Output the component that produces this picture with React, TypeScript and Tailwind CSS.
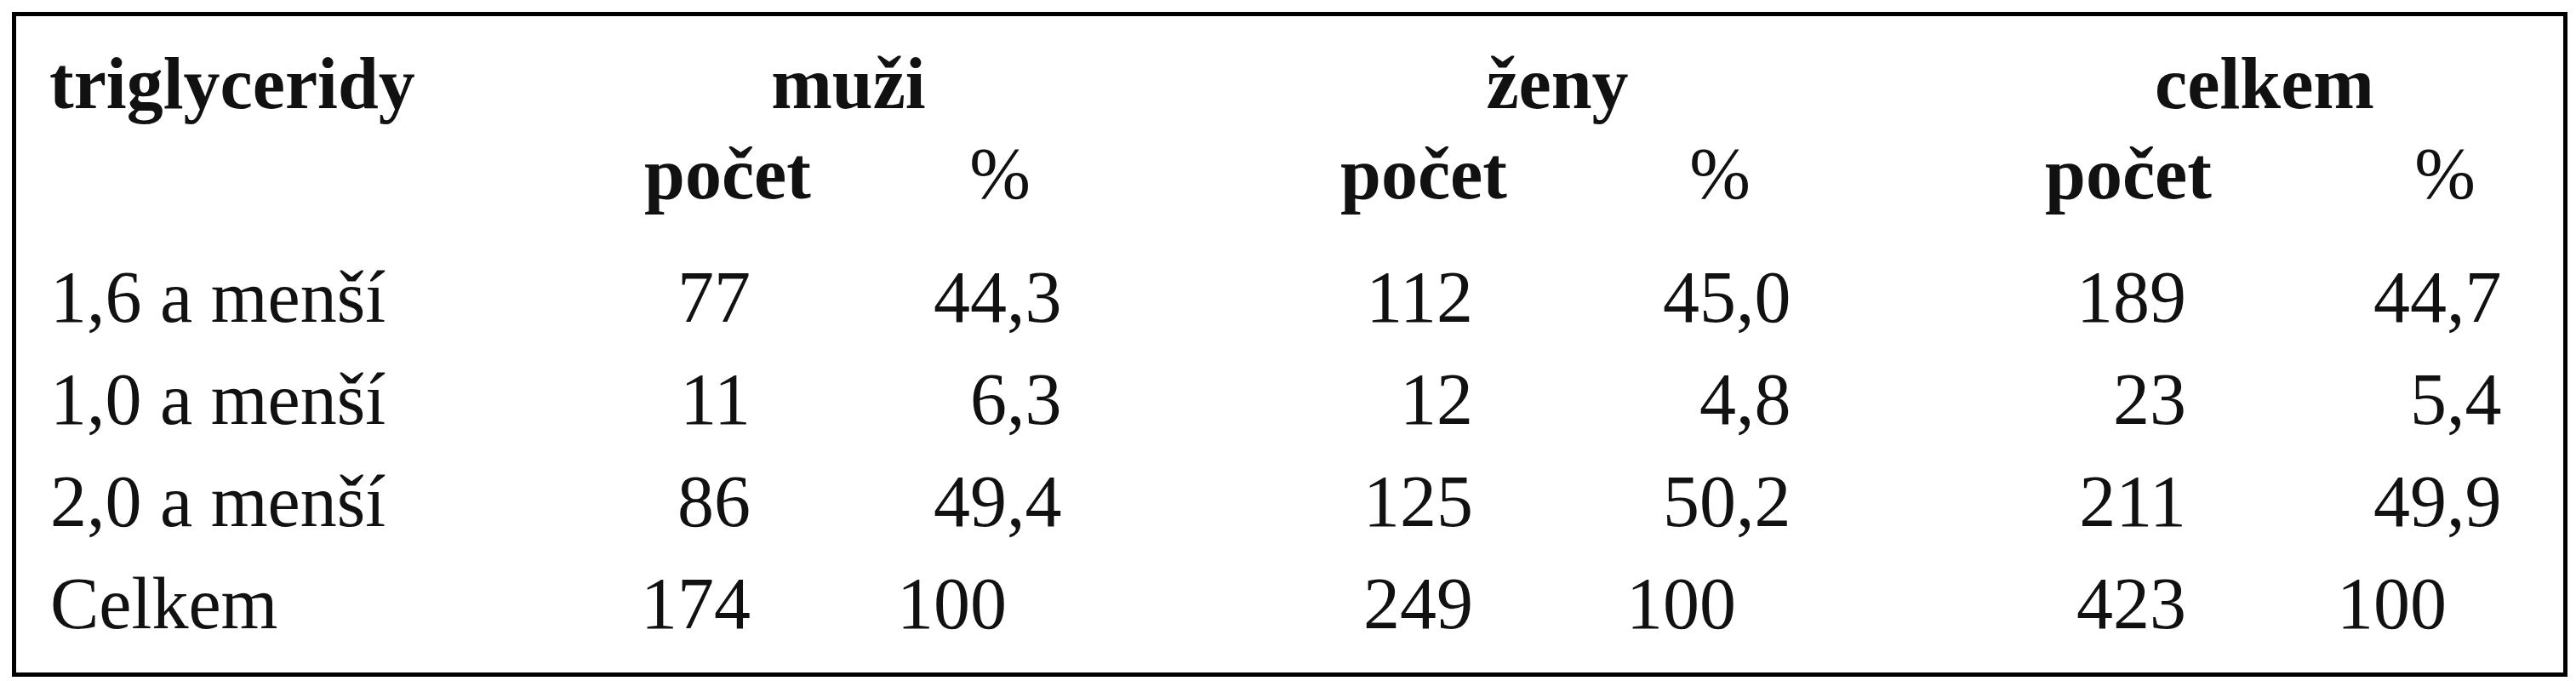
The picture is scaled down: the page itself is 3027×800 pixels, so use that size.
import React from "react";

type Row = {
  label: string;
  m: string;
  mp: [string, string];
  z: string;
  zp: [string, string];
  c: string;
  cp: [string, string];
};

const rows: Row[] = [
  { label: "1,6 a menší", m: "77", mp: ["44", ",3"], z: "112", zp: ["45", ",0"], c: "189", cp: ["44", ",7"] },
  { label: "1,0 a menší", m: "11", mp: ["6", ",3"], z: "12", zp: ["4", ",8"], c: "23", cp: ["5", ",4"] },
  { label: "2,0 a menší", m: "86", mp: ["49", ",4"], z: "125", zp: ["50", ",2"], c: "211", cp: ["49", ",9"] },
  { label: "Celkem", m: "174", mp: ["100", ""], z: "249", zp: ["100", ""], c: "423", cp: ["100", ""] },
];

export default function App() {
  return (
    <div className="bg-white w-[3027px] h-[800px] pt-[14px] pl-[14px] text-[#111] [font-family:'Liberation_Serif','Times_New_Roman',serif] text-[86px]">
      <div className="w-[3003px] h-[781px] border-[5px] border-black box-border">
        {/* header row 1 */}
        <div className="flex pt-[26px] leading-[106px] font-bold whitespace-nowrap">
          <div className="w-[681px] pl-[39px]">triglyceridy</div>
          <div className="w-[400px] ml-[97px] text-center">muži</div>
          <div className="w-[400px] ml-[433px] text-center">ženy</div>
          <div className="w-[400px] ml-[431px] text-center">celkem</div>
        </div>
        {/* header row 2 */}
        <div className="flex leading-[106px] whitespace-nowrap">
          <div className="w-[240px] ml-[716px] text-center font-bold">počet</div>
          <div className="w-[240px] ml-[80px] text-center">%</div>
          <div className="w-[240px] ml-[258px] text-center font-bold">počet</div>
          <div className="w-[240px] ml-[108px] text-center">%</div>
          <div className="w-[240px] ml-[240px] text-center font-bold">počet</div>
          <div className="w-[240px] ml-[132px] text-center">%</div>
        </div>
        {/* body */}
        <div className="mt-[32px] flex flex-col">
          {rows.map((r) => (
            <div key={r.label} className="flex leading-[120px] whitespace-nowrap">
              <div className="w-[681px] pl-[40px]">{r.label}</div>
              <div className="w-[182px] text-right">{r.m}</div>
              <div className="w-[301px] text-right">{r.mp[0]}</div>
              <div className="w-[117px]">{r.mp[1]}</div>
              <div className="w-[431px] text-right">{r.z}</div>
              <div className="w-[309px] text-right">{r.zp[0]}</div>
              <div className="w-[110px]">{r.zp[1]}</div>
              <div className="w-[419px] text-right">{r.c}</div>
              <div className="w-[306px] text-right">{r.cp[0]}</div>
              <div className="w-[100px]">{r.cp[1]}</div>
            </div>
          ))}
        </div>
      </div>
    </div>
  );
}
